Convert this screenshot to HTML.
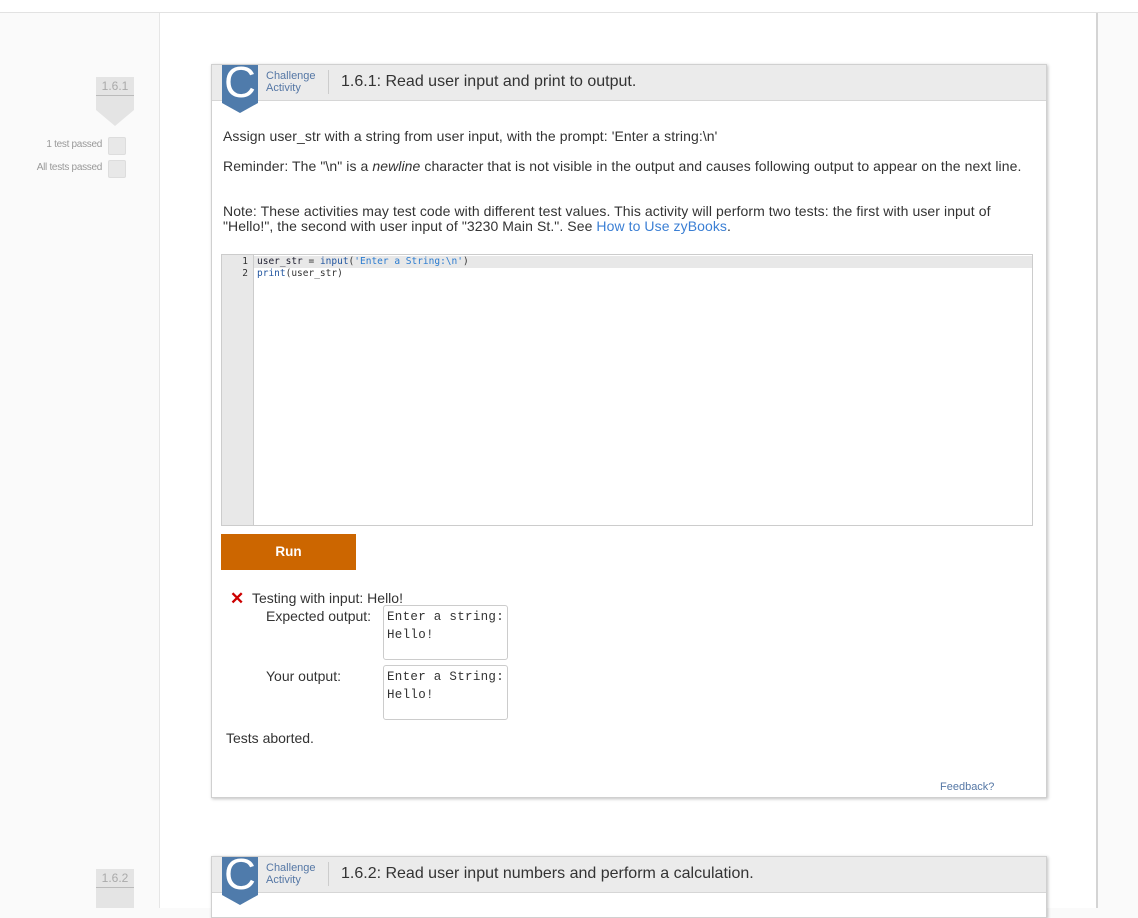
<!DOCTYPE html>
<html><head><style>
body{margin:0;width:1138px;height:908px;overflow:hidden;background:#fafafa;font-family:"Liberation Sans",sans-serif;position:relative}
.top{position:absolute;left:0;top:0;width:1138px;height:12px;background:#fff;border-bottom:1px solid #e2e2e2}
.main{position:absolute;left:159px;top:13px;width:936px;height:895px;background:#fff;border-left:1px solid #e6e6e6;border-right:2px solid #d4d4d4}
.abs{position:absolute}
.card{position:absolute;left:211px;width:834px;background:#fff;border:1px solid #d0d0d0;box-shadow:1px 1px 3px rgba(0,0,0,.25)}
.hdr{position:absolute;left:0;top:0;width:834px;height:35px;background:#ebebeb;border-bottom:1px solid #d6d6d6}
.badge{position:absolute;left:10px;top:0;width:36px;height:38px;background:#4f7bab;color:#fff;font-size:44px;line-height:36px;text-align:center}
.badge:after{content:"";position:absolute;left:0;top:38px;border-left:18px solid transparent;border-right:18px solid transparent;border-top:10px solid #4f7bab}
.ca{position:absolute;left:54px;top:5px;font-size:11px;line-height:12px;color:#5577a5;padding-right:12px;border-right:1px solid #ccc;height:24px}
.title{position:absolute;left:129px;top:8px;font-size:16px;color:#333}
.txt{position:absolute;left:11px;font-size:14px;color:#333;line-height:15px;letter-spacing:0.08px}
.sec{position:absolute;left:96px;width:38px;text-align:center;font-size:12px;color:#aaa;background:#e4e4e4;height:18px;line-height:18px;border-bottom:1px solid #bbb}
.chk{position:absolute;left:108px;width:16px;height:16px;background:#e8e8e8;border:1px solid #ddd;border-radius:2px}
.lbl{position:absolute;right:1036px;font-size:10px;color:#999;letter-spacing:-.3px}
.box{position:absolute;left:171px;width:125px;height:55px;border:1px solid #ccc;border-radius:3px;font-family:"Liberation Mono",monospace;font-size:12.5px;letter-spacing:0.3px;line-height:18px;padding:2px 0 0 3px;box-sizing:border-box;color:#333}
</style></head><body>
<div class="top"></div>
<div class="main"></div>
<div class="sec" style="top:77px">1.6.1</div>
<div class="abs" style="left:96px;top:96px;width:38px;height:14px;background:#e4e4e4"></div>
<div class="abs" style="left:96px;top:110px;border-left:19px solid transparent;border-right:19px solid transparent;border-top:16px solid #e4e4e4"></div>
<div class="lbl" style="top:139px">1 test passed</div><div class="chk" style="top:137px"></div>
<div class="lbl" style="top:162px">All tests passed</div><div class="chk" style="top:160px"></div>

<div class="card" style="top:64px;height:732px">
 <div class="hdr"></div>
 <div class="badge">C</div>
 <div class="ca">Challenge<br>Activity</div>
 <div class="title">1.6.1: Read user input and print to output.</div>
 <div class="txt" style="top:64px">Assign user_str with a string from user input, with the prompt: 'Enter a string:\n'</div>
 <div class="txt" style="top:94px">Reminder: The "\n" is a <i>newline</i> character that is not visible in the output and causes following output to appear on the next line.</div>
 <div class="txt" style="top:139px;width:790px">Note: These activities may test code with different test values. This activity will perform two tests: the first with user input of "Hello!", the second with user input of "3230 Main St.". See <span style="color:#3b7fd4">How to Use zyBooks</span>.</div>
 <div class="abs" style="left:9px;top:189px;width:810px;height:270px;border:1px solid #ccc">
  <div class="abs" style="left:0;top:0;width:31px;height:270px;background:#e8e8e8;border-right:1px solid #ccc"></div>
  <div class="abs" style="left:32px;top:1px;width:778px;height:12px;background:#e8e8e8"></div>
  <div class="abs" style="left:0;top:1px;width:26px;text-align:right;font-family:'DejaVu Sans Mono',monospace;font-size:9.5px;line-height:12px;color:#333">1<br>2</div>
  <div class="abs" style="left:35px;top:1px;font-family:'DejaVu Sans Mono',monospace;font-size:9.5px;line-height:12px;color:#333;white-space:pre"><span style="color:#223">user_str</span> = <span style="color:#2256a0">input</span>(<span style="color:#2a7bd0">'Enter a String:\n'</span>)
<span style="color:#2256a0">print</span>(user_str)</div>
 </div>
 <div class="abs" style="left:9px;top:469px;width:135px;height:36px;background:#cc6600;color:#fff;font-weight:bold;font-size:13.5px;line-height:36px;text-align:center">Run</div>
 <div class="abs" style="left:18px;top:524px;color:#c00;font-size:17px;font-weight:bold">✕</div>
 <div class="txt" style="left:40px;top:526px;font-size:14px;letter-spacing:0">Testing with input: Hello!</div>
 <div class="txt" style="left:54px;top:544px;font-size:14px;letter-spacing:0">Expected output:</div>
 <div class="box" style="top:540px">Enter a string:<br>Hello!</div>
 <div class="txt" style="left:54px;top:604px;font-size:14px;letter-spacing:0">Your output:</div>
 <div class="box" style="top:600px">Enter a String:<br>Hello!</div>
 <div class="txt" style="left:14px;top:666px;font-size:14px;letter-spacing:0">Tests aborted.</div>
 <div class="abs" style="left:728px;top:716px;font-size:11px;color:#5577a5">Feedback?</div>
</div>

<div class="sec" style="top:869px">1.6.2</div>
<div class="abs" style="left:96px;top:888px;width:38px;height:20px;background:#e4e4e4"></div>
<div class="card" style="top:856px;height:60px">
 <div class="hdr"></div>
 <div class="badge">C</div>
 <div class="ca">Challenge<br>Activity</div>
 <div class="title">1.6.2: Read user input numbers and perform a calculation.</div>
</div>
</body></html>
